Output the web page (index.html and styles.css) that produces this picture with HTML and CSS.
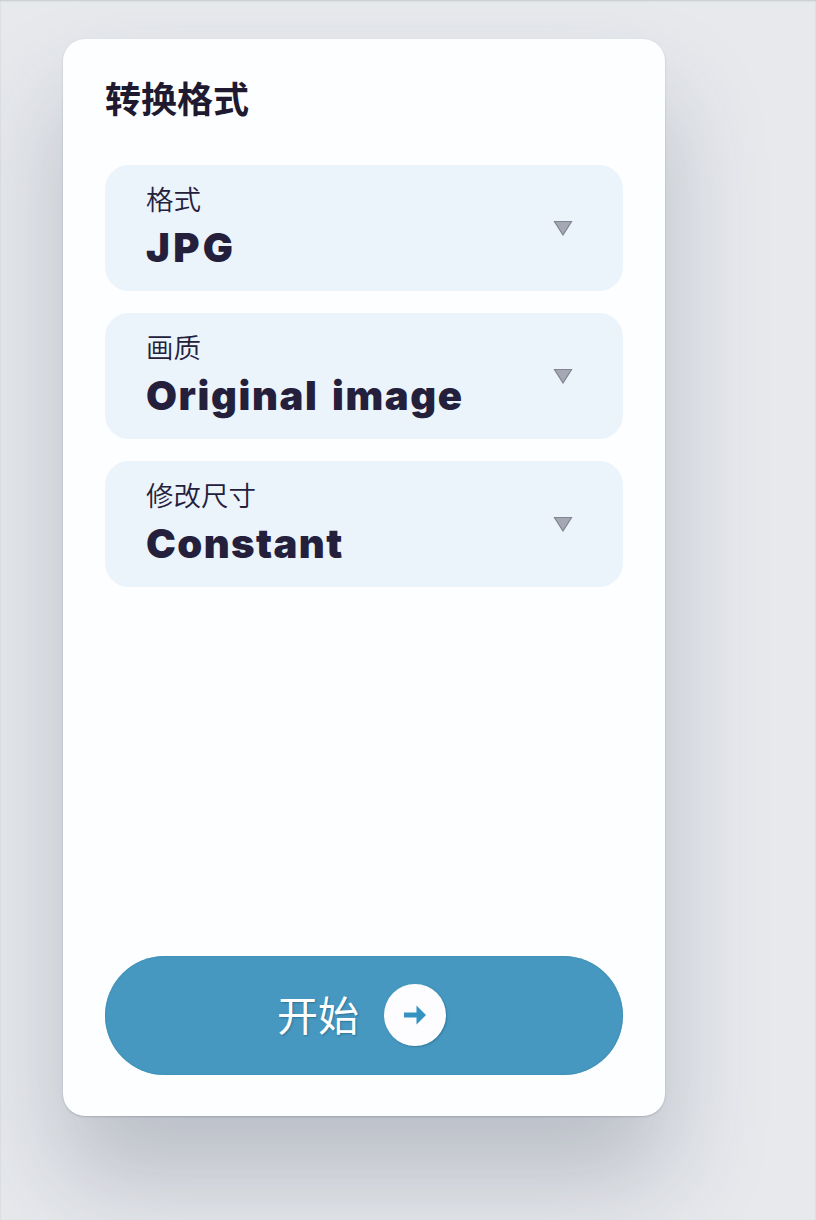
FILE: index.html
```html
<!DOCTYPE html>
<html lang="zh-CN">
<head>
    <meta charset="UTF-8">
    <meta name="viewport" content="width=device-width, initial-scale=1.0">
    <title>转换格式</title>
    <link rel="stylesheet" href="styles.css">
</head>
<body>
    <div class="panel">
        <h1 class="title">转换格式</h1>
        <div class="options">
            <div class="option">
                <div class="option-text">
                    <div class="label">格式</div>
                    <div class="value value-format">JPG</div>
                </div>
                <svg class="caret" viewBox="0 0 20 16"><path d="M1.5 1.5h17L10 15z"/></svg>
            </div>
            <div class="option">
                <div class="option-text">
                    <div class="label">画质</div>
                    <div class="value value-quality">Original image</div>
                </div>
                <svg class="caret" viewBox="0 0 20 16"><path d="M1.5 1.5h17L10 15z"/></svg>
            </div>
            <div class="option">
                <div class="option-text">
                    <div class="label">修改尺寸</div>
                    <div class="value value-size">Constant</div>
                </div>
                <svg class="caret" viewBox="0 0 20 16"><path d="M1.5 1.5h17L10 15z"/></svg>
            </div>
        </div>
        <button class="start" type="button">
            <span class="start-text">开始</span>
            <span class="start-icon">
                <svg viewBox="0 0 24 20"><path d="M1 7.5h12.5V.5L23 10l-9.500 9.500v-7H1z"/></svg>
            </span>
        </button>
    </div>
</body>
</html>
```

FILE: styles.css
```css
:root {
    --bg-color: #e7e9ed;
    --panel-color: #fdfeff;
    --option-color: #ebf3fb;
    --text-color: #24203b;
    --accent: #4698c1;
}

* {
    box-sizing: border-box;
    margin: 0;
    padding: 0;
}

body {
    min-height: 1220px;
    padding: 39px 0 0 63px;
    overflow: hidden;
    background: var(--bg-color);
    color: var(--text-color);
    font-family: Inter, "Noto Sans CJK SC", sans-serif;
    box-shadow: inset 0 1px 2px #c5cacd;
}

.panel {
    display: flex;
    flex-direction: column;
    width: 602px;
    height: 1077px;
    padding: 34px 42px 41px;
    border-radius: 22px;
    background: var(--panel-color);
    box-shadow: 0 1px 2px rgba(60, 75, 95, 0.25), 0 62px 100px rgba(50, 60, 85, 0.25);
}

.title {
    height: 48px;
    margin-bottom: 44px;
    font-family: "Noto Sans CJK SC", sans-serif;
    font-size: 36px;
    font-weight: 700;
    line-height: 48px;
    color: #201a31;
}

.options {
    display: flex;
    flex-direction: column;
    gap: 22px;
}

.option {
    display: flex;
    align-items: center;
    justify-content: space-between;
    width: 518px;
    height: 126px;
    padding: 0 50px 0 41px;
    border-radius: 24px;
    background: var(--option-color);
}

.label {
    height: 40px;
    font-family: "Noto Sans CJK SC", sans-serif;
    font-size: 27.5px;
    font-weight: 350;
    line-height: 34px;
}

.value {
    height: 54px;
    font-size: 40px;
    font-weight: 900;
    line-height: 54px;
    letter-spacing: 1.4px;
    white-space: nowrap;
}

.value-format {
    letter-spacing: 3.3px;
}

.value-quality {
    letter-spacing: 1.6px;
    word-spacing: 4px;
}

.caret {
    width: 20px;
    height: 16px;
    fill: #a4a8b4;
    stroke: #81858f;
    stroke-width: 1.2;
}

.start {
    display: flex;
    align-items: center;
    justify-content: center;
    gap: 25px;
    height: 119px;
    margin-top: auto;
    padding: 0 5px 2px 0;
    border: 0;
    border-radius: 60px;
    background: var(--accent);
    box-shadow: inset 0 0 2px #31809f;
    color: #fff;
    cursor: pointer;
}

.start-text {
    padding-bottom: 4px;
    font-family: "Noto Sans CJK SC", sans-serif;
    font-size: 41px;
    line-height: 56px;
    text-shadow: 1px 1px 2px #2d7397;
}

.start-icon {
    display: flex;
    align-items: center;
    justify-content: center;
    width: 62px;
    height: 62px;
    border-radius: 50%;
    background: #fdfdff;
    box-shadow: 1px 1px 2px #327a9d;
}

.start-icon svg {
    width: 24px;
    height: 20px;
    fill: #3593c1;
}
```
